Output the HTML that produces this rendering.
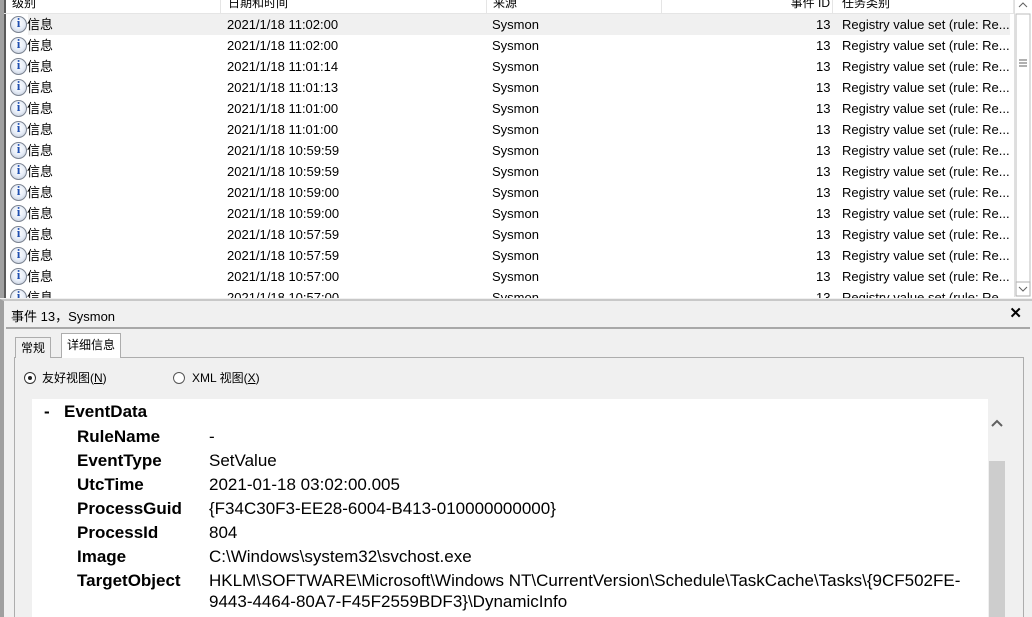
<!DOCTYPE html>
<html style="overflow:hidden;width:1032px;height:617px"><head><meta charset="utf-8"><style>
*{margin:0;padding:0;box-sizing:border-box}
body{width:1032px;height:617px;overflow:hidden;background:#f0f0f0;font-family:"Liberation Sans","Noto Sans CJK SC",sans-serif;position:relative;color:#000}
.list{position:absolute;left:0;top:0;width:1032px;height:298px;background:#fff;overflow:hidden;border-left:4px solid #a0a0a0}
.list:before{content:"";position:absolute;left:0;top:0;bottom:0;width:2px;background:#5a5a5a}
.hdr{position:absolute;top:-6px;height:19px;font-size:12px;color:#000;border-right:1px solid #e5e5e5;line-height:19px}
.hb{position:absolute;top:13px;left:0;width:1010px;height:1px;background:#e5e5e5}
.row{position:absolute;left:2px;width:1004px;height:21px;font-size:13px;line-height:21px}
.row span{position:absolute;top:0;white-space:nowrap}
.ic{position:absolute;left:4px;top:2px;width:17px;height:17px;border-radius:50%;background:radial-gradient(circle at 50% 40%,#fff 0,#e8eef8 50%,#b9c3d3 100%);border:1px solid #7a8290}
.ic:after{content:"i";position:absolute;left:0;right:0;top:-2px;text-align:center;font:bold 13px "Liberation Serif",serif;color:#1f4fb0}
.sb{position:absolute;left:1010px;top:0;width:17px;height:297px;background:#fff;border-left:1px solid #e0e0e0}
.panel{position:absolute;left:0;top:299px;width:1032px;height:318px;border-left:4px solid #a0a0a0;border-top:2px solid #c8c8c8;overflow:hidden}
.panel:before{content:"";position:absolute;left:-2px;top:0;bottom:0;width:2px;background:#5a5a5a}
.title{position:absolute;left:7px;top:5px;font-size:13px}
.tline{position:absolute;left:2px;top:26px;width:1024px;height:2px;background:#a8a8a8}
.tab{position:absolute;font-size:12px;border:1px solid #adadad;border-bottom:none;padding:0 5px}
.box{position:absolute;left:10px;top:56px;width:1010px;height:270px;border:1px solid #adadad;background:#f0f0f0}
.rad{position:absolute;width:12px;height:12px;border:1px solid #333;border-radius:50%;background:#fff}
.detail{position:absolute;left:28px;top:98px;width:956px;height:230px;background:#fff}
.l{position:absolute;left:45px;font-weight:bold;font-size:17px}
.v{position:absolute;left:177px;font-size:17px;white-space:nowrap}
</style></head><body>
<div class="list">
<div class="hdr" style="left:8px;width:209px">级别</div>
<div class="hdr" style="left:218px;width:265px;padding-left:6px">日期和时间</div>
<div class="hdr" style="left:483px;width:175px;padding-left:6px">来源</div>
<div class="hdr" style="left:658px;width:171px;text-align:right;padding-right:2px">事件 ID</div>
<div class="hdr" style="left:830px;width:180px;padding-left:8px">任务类别</div>
<div class="hb"></div>
<div id="rows"></div>
<div class="sb">
<svg width="17" height="297" style="position:absolute;left:0;top:0"><polyline points="4,7 8,3 12,7" fill="none" stroke="#606060"/><rect x="1" y="14" width="14" height="268" fill="#fff" stroke="#bdbdbd"/><path d="M4 60h8M4 63h8M4 66h8" stroke="#606060"/><rect x="1" y="282" width="14" height="14" fill="#fff" stroke="#adadad"/><polyline points="4,287 8,291 12,287" fill="none" stroke="#606060"/></svg>
</div>
</div>
<div class="panel">
<div class="title">事件 13，Sysmon</div>
<div style="position:absolute;right:10px;top:3px;font-weight:bold;font-size:15px">✕</div>
<div class="tline"></div>
<div class="box"></div>
<div class="tab" style="left:11px;top:36px;height:21px;line-height:20px;background:#f0f0f0">常规</div>
<div class="tab" style="left:57px;top:32px;height:25px;line-height:22px;background:#fff">详细信息</div>
<div class="rad" style="left:20px;top:71px"><div style="position:absolute;left:3px;top:3px;width:4px;height:4px;border-radius:50%;background:#222"></div></div>
<div style="position:absolute;left:38px;top:68px;font-size:12px">友好视图(<u>N</u>)</div>
<div class="rad" style="left:169px;top:71px;border-color:#555"></div>
<div style="position:absolute;left:188px;top:68px;font-size:12px">XML 视图(<u>X</u>)</div>
<div class="detail">
<div style="position:absolute;left:12px;top:3px;font-weight:bold;font-size:17px">-</div>
<div style="position:absolute;left:32px;top:3px;font-weight:bold;font-size:17px">EventData</div>
<div class="l" style="top:28px">RuleName</div><div class="v" style="top:28px">-</div>
<div class="l" style="top:52px">EventType</div><div class="v" style="top:52px">SetValue</div>
<div class="l" style="top:76px">UtcTime</div><div class="v" style="top:76px">2021-01-18 03:02:00.005</div>
<div class="l" style="top:100px">ProcessGuid</div><div class="v" style="top:100px">{F34C30F3-EE28-6004-B413-010000000000}</div>
<div class="l" style="top:124px">ProcessId</div><div class="v" style="top:124px">804</div>
<div class="l" style="top:148px">Image</div><div class="v" style="top:148px">C:\Windows\system32\svchost.exe</div>
<div class="l" style="top:172px">TargetObject</div><div class="v" style="top:172px">HKLM\SOFTWARE\Microsoft\Windows NT\CurrentVersion\Schedule\TaskCache\Tasks\{9CF502FE-</div>
<div class="v" style="top:193px">9443-4464-80A7-F45F2559BDF3}\DynamicInfo</div>
</div>
<svg width="16" height="220" style="position:absolute;left:985px;top:98px"><polyline points="3,27 8,22 13,27" fill="none" stroke="#606060" stroke-width="2"/><rect x="0" y="62" width="16" height="160" fill="#cdcdcd"/></svg>
</div>
<script>
var t=["11:02:00","11:02:00","11:01:14","11:01:13","11:01:00","11:01:00","10:59:59","10:59:59","10:59:00","10:59:00","10:57:59","10:57:59","10:57:00","10:57:00"];
var h="";
for(var i=0;i<t.length;i++){var y=14+i*21;
h+='<div class="row" style="top:'+y+'px;'+(i==0?'background:linear-gradient(90deg,#fff 22px,#f0f0f0 22px)':'')+'"><div class="ic"></div><span style="left:21px">信息</span><span style="left:221px">2021/1/18 '+t[i]+'</span><span style="left:486px">Sysmon</span><span style="left:810px">13</span><span style="left:836px">Registry value set (rule: Re...</span></div>';}
document.getElementById("rows").outerHTML=h;
</script>
</body></html>
